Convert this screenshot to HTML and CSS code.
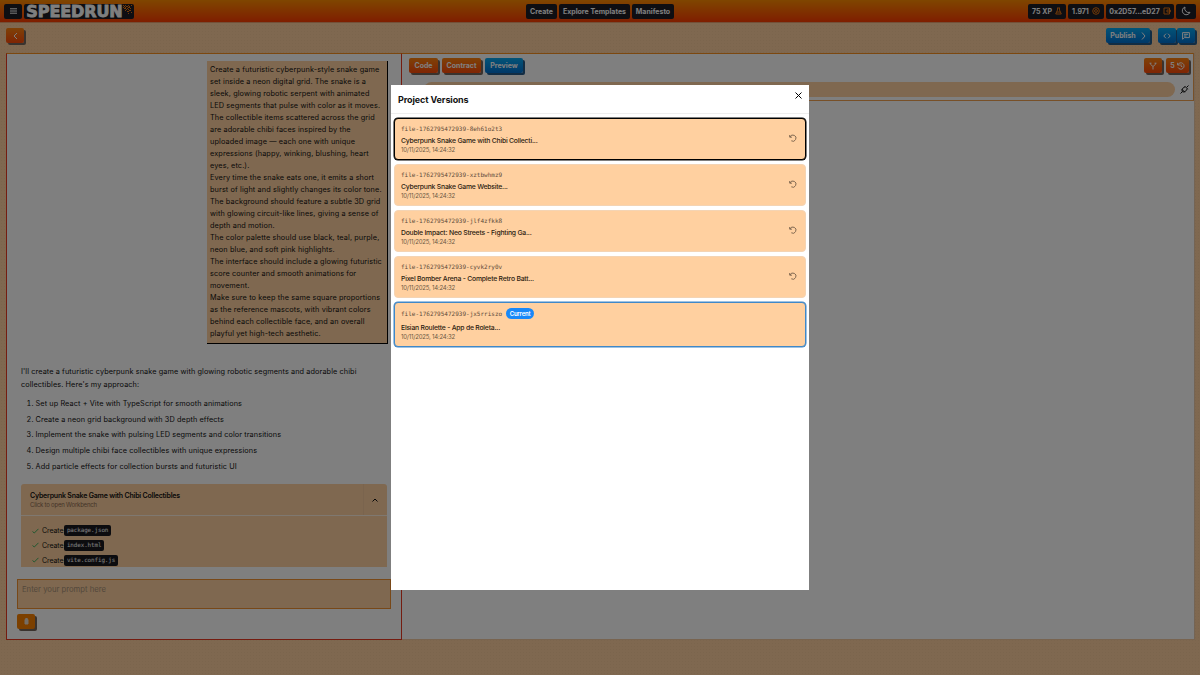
FILE: index.html
```html
<!DOCTYPE html>
<html lang="en">
<head>
  <meta charset="UTF-8" />
  <meta name="viewport" content="width=device-width, initial-scale=1.0" />
  <title>Speedrun</title>
  <link rel="stylesheet" href="styles.css">
</head>
<body>
  <header>
    <div class="header-side">
      <button class="chip menu-btn"><svg width="7" height="6" viewBox="0 0 7 6"><path d="M0 .8h7M0 3h7M0 5.2h7"/></svg></button>
      <div class="chip logo"><span>SPEEDRUN</span>
        <svg width="9" height="9" viewBox="0 0 9 9"><path d="M0 .5h1M2 .5h1M5 .5h1M8 .5h1M1 1.5h1M3 1.5h2M6 1.5h1M0 2.5h1M2 2.5h1M5 2.5h2M1 3.5h2M4 3.5h1M7 3.5h1M3 4.5h1M5 4.5h1M2 5.5h1M6 5.5h2M4 6.5h2M8 7.5h1M5 8.5h1"/></svg>
      </div>
    </div>
    <nav>
      <a class="chip nav-create" href="#">Create</a>
      <a class="chip nav-explore" href="#">Explore Templates</a>
      <a class="chip nav-manifesto" href="#">Manifesto</a>
    </nav>
    <div class="header-side right">
      <span class="chip xp">75 XP <svg width="7" height="8" viewBox="0 0 7 8"><path d="M2 1h3M2.5 1v2L.7 7h5.6L4.5 3V1M2 5h3"/></svg></span>
      <span class="chip coins">1.971 <svg width="8" height="8" viewBox="0 0 8 8"><circle cx="4" cy="4" r="3.3"/><circle cx="4" cy="4" r="1.4"/></svg></span>
      <span class="chip wallet">0x2D57...eD27 <svg width="8" height="8" viewBox="0 0 8 8"><path d="M1 1h5.5v6H1zM4 3h3.3v2H4z"/></svg></span>
      <button class="chip moon"><svg width="10" height="10" viewBox="0 0 10 10"><path d="M4 1a4 4 0 1 0 5 5.3A4 4 0 0 1 4 1z"/></svg></button>
    </div>
  </header>

  <div class="toolbar">
    <button class="btn orange back"><svg width="5" height="8" viewBox="0 0 5 8"><path d="M4 1L1 4l3 3"/></svg></button>
    <div class="toolbar-right">
      <button class="btn blue publish">Publish <svg width="5" height="8" viewBox="0 0 5 8"><path d="M1 .5L4 4 1 7.5"/></svg></button>
      <div class="view-toggle">
        <button class="btn blue"><svg width="8" height="6" viewBox="0 0 8 6"><path d="M3 .7L.8 3 3 5.3M5 .7L7.2 3 5 5.3"/></svg></button>
        <button class="btn blue"><svg width="8" height="8" viewBox="0 0 8 8"><path d="M.6.6h6.8v5H2.3L.6 7.3zM2 2.3h4M2 4h2.5"/></svg></button>
      </div>
    </div>
  </div>

  <main>
    <section class="chat">
      <div class="user-message">Create a futuristic cyberpunk-style snake game<br>set inside a neon digital grid. The snake is a<br>sleek, glowing robotic serpent with animated<br>LED segments that pulse with color as it moves.<br>The collectible items scattered across the grid<br>are adorable chibi faces inspired by the<br>uploaded image — each one with unique<br>expressions (happy, winking, blushing, heart<br>eyes, etc.).<br>Every time the snake eats one, it emits a short<br>burst of light and slightly changes its color tone.<br>The background should feature a subtle 3D grid<br>with glowing circuit-like lines, giving a sense of<br>depth and motion.<br>The color palette should use black, teal, purple,<br>neon blue, and soft pink highlights.<br>The interface should include a glowing futuristic<br>score counter and smooth animations for<br>movement.<br>Make sure to keep the same square proportions<br>as the reference mascots, with vibrant colors<br>behind each collectible face, and an overall<br>playful yet high-tech aesthetic.</div>

      <div class="reply">
        <p>I'll create a futuristic cyberpunk snake game with glowing robotic segments and adorable chibi<br>collectibles. Here's my approach:</p>
        <ol>
          <li>Set up React + Vite with TypeScript for smooth animations</li>
          <li>Create a neon grid background with 3D depth effects</li>
          <li>Implement the snake with pulsing LED segments and color transitions</li>
          <li>Design multiple chibi face collectibles with unique expressions</li>
          <li>Add particle effects for collection bursts and futuristic UI</li>
        </ol>
      </div>

      <div class="artifact">
        <div class="artifact-head">
          <div class="artifact-title">
            <h4>Cyberpunk Snake Game with Chibi Collectibles</h4>
            <p>Click to open Workbench</p>
          </div>
          <div class="artifact-toggle"><svg width="6" height="4" viewBox="0 0 6 4"><path d="M.5 3.5L3 1l2.5 2.5"/></svg></div>
        </div>
        <ul>
          <li><svg width="7" height="6" viewBox="0 0 7 6"><path d="M.5 3.5L2.3 5 6.5.8"/></svg>Create <code>package.json</code></li>
          <li><svg width="7" height="6" viewBox="0 0 7 6"><path d="M.5 3.5L2.3 5 6.5.8"/></svg>Create <code>index.html</code></li>
          <li><svg width="7" height="6" viewBox="0 0 7 6"><path d="M.5 3.5L2.3 5 6.5.8"/></svg>Create <code>vite.config.js</code></li>
        </ul>
      </div>

      <textarea placeholder="Enter your prompt here"></textarea>
      <button class="btn amber attach"><svg width="5" height="8" viewBox="0 0 5 8"><path d="M1 1.5h.7V.5h1.6v1H4v4.500H1z"/></svg></button>
    </section>

    <section class="workbench">
      <div class="workbench-head">
        <div class="tabs">
          <button class="btn orange tab-code">Code</button>
          <button class="btn orange tab-contract">Contract</button>
          <button class="btn blue tab-preview">Preview</button>
          <div class="tab-actions">
            <button class="btn orange fork"><svg width="8" height="8" viewBox="0 0 8 8"><path d="M1.5 1.3v1L4 4.5l2.5-2.2v-1M4 4.5v3M.5 1.2h2M5.5 1.2h2"/></svg></button>
            <button class="btn orange history">5 <svg width="8" height="8" viewBox="0 0 8 8"><path d="M.6.8v2.2h2.2M.9 2.8A3.2 3.2 0 1 1 1 5.4M4 2.3V4.2l1.5.8"/></svg></button>
          </div>
        </div>
        <div class="address">
          <div class="address-bar"></div>
          <svg width="9" height="9" viewBox="0 0 9 9"><path d="M.5 8.5L2.3 6.7M6.7 2.3L8.5.5M4.8 1.2L7.8 4.2M1.8 4.2l3 3M5.2 1.6L2.5 3.5Q1.600 5 2.300 6.700Q4 7.400 5.300 6.500L7.400 3.800"/></svg>
        </div>
      </div>
    </section>
  </main>

  <div class="overlay"></div>

  <div class="modal">
    <div class="modal-head">
      <h2>Project Versions</h2>
      <button class="close"><svg width="7" height="7" viewBox="0 0 7 7"><path d="M.5.5l6 6M6.5.5l-6 6"/></svg></button>
    </div>
    <div class="versions">
      <div class="version focused">
        <div class="info">
          <div class="file">file-1762795472939-8eh61o2t3</div>
          <div class="name">Cyberpunk Snake Game with Chibi Collecti...</div>
          <div class="date">10/11/2025, 14:24:32</div>
        </div>
        <svg class="restore" width="8" height="8" viewBox="0 0 8 8"><path d="M.7 1v2.2h2.2M1 3A3.1 3.1 0 1 1 2.3 6.8"/></svg>
      </div>
      <div class="version">
        <div class="info">
          <div class="file">file-1762795472939-xztbwhmz9</div>
          <div class="name">Cyberpunk Snake Game Website...</div>
          <div class="date">10/11/2025, 14:24:32</div>
        </div>
        <svg class="restore" width="8" height="8" viewBox="0 0 8 8"><path d="M.7 1v2.2h2.2M1 3A3.1 3.1 0 1 1 2.3 6.8"/></svg>
      </div>
      <div class="version">
        <div class="info">
          <div class="file">file-1762795472939-jlf4zfkk8</div>
          <div class="name">Double Impact: Neo Streets - Fighting Ga...</div>
          <div class="date">10/11/2025, 14:24:32</div>
        </div>
        <svg class="restore" width="8" height="8" viewBox="0 0 8 8"><path d="M.7 1v2.2h2.2M1 3A3.1 3.1 0 1 1 2.3 6.8"/></svg>
      </div>
      <div class="version">
        <div class="info">
          <div class="file">file-1762795472939-cyvk2ry0v</div>
          <div class="name">Pixel Bomber Arena - Complete Retro Batt...</div>
          <div class="date">10/11/2025, 14:24:32</div>
        </div>
        <svg class="restore" width="8" height="8" viewBox="0 0 8 8"><path d="M.7 1v2.2h2.2M1 3A3.1 3.1 0 1 1 2.3 6.8"/></svg>
      </div>
      <div class="version current">
        <div class="info">
          <div class="file">file-1762795472939-jx5rriszo <span class="badge">Current</span></div>
          <div class="name">Elsian Roulette - App de Roleta...</div>
          <div class="date">10/11/2025, 14:24:32</div>
        </div>
      </div>
    </div>
  </div>
</body>
</html>
```
FILE: styles.css
```css
* {
  margin: 0;
  padding: 0;
  box-sizing: border-box;
}

body {
  font-family: Inter, sans-serif;
  font-size: 7px;
  color: #111;
  height: 675px;
  overflow: hidden;
  background-color: #ffd0a0;
  background-image: radial-gradient(rgba(190, 160, 110, 0.12) 0.6px, transparent 0.8px);
  background-size: 3px 3px;
}

button {
  font-family: inherit;
  border: none;
  cursor: pointer;
}

svg {
  fill: none;
  stroke: currentColor;
  stroke-width: 1;
  flex-shrink: 0;
}

header {
  height: 23px;
  padding: 0 4px;
  display: flex;
  align-items: center;
  justify-content: space-between;
  background: linear-gradient(#ff8c00, #ff3c00);
  border-bottom: 1px solid #e8a070;
}

.header-side {
  display: flex;
  gap: 2px;
  flex: 1;
}

.header-side.right {
  justify-content: flex-end;
}

nav {
  display: flex;
  gap: 2px;
}

.chip {
  height: 15px;
  display: flex;
  align-items: center;
  justify-content: center;
  gap: 3px;
  background: #1c1c24;
  color: #fff;
  border-radius: 2px;
  font-size: 7px;
  font-weight: 700;
  text-decoration: none;
  white-space: nowrap;
}

.chip svg {
  color: #e87410;
}

.menu-btn {
  width: 18px;
}

.menu-btn svg,
.moon svg {
  color: #fff;
}

.logo {
  width: 110px;
  gap: 0;
}

.logo span {
  font-family: "DejaVu Sans", sans-serif;
  font-size: 16px;
  line-height: 15px;
  letter-spacing: -0.1px;
  -webkit-text-stroke: 0.8px #fff;
}

.logo svg {
  margin-top: -4px;
}

.nav-create { width: 31px; }
.nav-explore { width: 71px; }
.nav-manifesto { width: 42px; }
.xp { width: 38px; }
.coins { width: 36px; }
.wallet { width: 68px; }
.moon { width: 20px; }

.toolbar {
  height: 30px;
  padding: 5px 5px 0 6px;
  display: flex;
  justify-content: space-between;
}

.toolbar-right,
.view-toggle {
  display: flex;
}

.toolbar-right {
  gap: 8px;
}

.view-toggle {
  gap: 1px;
}

.view-toggle .btn {
  width: 18px;
}

.btn {
  height: 15px;
  display: flex;
  align-items: center;
  justify-content: center;
  color: #fff;
  font-size: 7px;
  font-weight: 700;
  border-radius: 2px;
  box-shadow: 2px 2px 0 #75665c;
}

.orange {
  background: linear-gradient(#ff8410, #ff4a08);
}

.blue {
  background: linear-gradient(#08a8f0, #0070d0);
  box-shadow: 2px 2px 0 #245a88;
}

.amber {
  background: #f88000;
}

.back {
  width: 18px;
}

.publish {
  width: 44px;
  gap: 5px;
}

main {
  height: 587px;
  margin: 0 5px 0 6px;
  display: flex;
}

.chat {
  width: 396px;
  flex-shrink: 0;
  padding: 7px 10px 0;
  background: #fff;
  border: 1px solid #e83820;
  border-top-color: #f89020;
}

.user-message {
  width: 181px;
  height: 283px;
  margin-left: 190px;
  padding: 3px 0 0 3px;
  background: #ffd0a0;
  border-right: 1px solid #000;
  border-bottom: 1px solid #000;
  font-size: 7.3px;
  letter-spacing: 0.12px;
  line-height: 12px;
  white-space: nowrap;
}

.reply {
  margin: 22px 0 0 4px;
  font-size: 7.3px;
  letter-spacing: 0.1px;
  line-height: 12.5px;
}

.reply ol {
  margin: 5px 0 0 14.5px;
}

.reply li {
  height: 15.7px;
  line-height: 15.7px;
}

.artifact {
  width: 366px;
  height: 83px;
  margin: 10px 0 0 4px;
  background: #ffd0a0;
  border-radius: 3px 3px 0 0;
  overflow: hidden;
}

.artifact-head {
  height: 32px;
  display: flex;
  border-bottom: 1px solid #fff0e0;
}

.artifact-title {
  flex: 1;
  padding: 7px 0 0 9px;
}

.artifact-title h4 {
  font-size: 7px;
  letter-spacing: -0.2px;
  line-height: 10px;
  font-weight: 600;
}

.artifact-title p {
  font-size: 6px;
  letter-spacing: -0.2px;
  line-height: 8px;
  color: #8a6a50;
}

.artifact-toggle {
  width: 24px;
  padding-right: 1px;
  display: flex;
  align-items: center;
  justify-content: center;
  border-left: 1px solid #f4c89c;
}

.artifact ul {
  list-style: none;
  padding: 7px 0 0 11px;
}

.artifact li {
  height: 14.7px;
  display: flex;
  align-items: center;
  font-size: 7px;
  letter-spacing: -0.1px;
}

.artifact li svg {
  color: #40b060;
  margin-right: 3px;
}

.artifact code {
  height: 11px;
  margin-left: 1px;
  padding: 0 2.5px;
  line-height: 11px;
  font-family: "DejaVu Sans Mono", monospace;
  font-size: 5.9px;
  background: #18181f;
  color: #fff;
  border-radius: 2px;
}

textarea {
  display: block;
  width: 374px;
  height: 30px;
  margin-top: 12px;
  padding: 5px 4px;
  resize: none;
  background: #ffd0a0;
  border: 1px solid #f09030;
  font-family: inherit;
  font-size: 7.7px;
}

textarea::placeholder {
  color: #a89078;
}

.attach {
  width: 18px;
  margin-top: 5px;
}

.attach svg {
  fill: #e8dccc;
  color: #e8dccc;
}

.workbench {
  flex: 1;
  background: #fff;
  border-right: 1px solid #e8c8a8;
  border-bottom: 1px solid #f0c8a0;
}

.workbench-head {
  height: 48px;
  border: 1px solid #f0a050;
  border-left: none;
  border-top-color: #f89020;
}

.tabs {
  display: flex;
  gap: 4px;
  padding: 4px 4px 0 7px;
}

.tab-code { width: 29px; }
.tab-contract { width: 39px; }
.tab-preview { width: 38px; }

.tab-actions {
  display: flex;
  gap: 4px;
  margin-left: auto;
}

.fork { width: 18px; }

.history {
  width: 23px;
  gap: 2px;
}

.address {
  display: flex;
  align-items: center;
  gap: 5px;
  padding: 9px 4px 0 22px;
}

.address-bar {
  flex: 1;
  height: 15px;
  border-radius: 8px;
  background: #ffd0a0;
}

.overlay {
  position: fixed;
  top: 0;
  left: 0;
  width: 100%;
  height: 100%;
  background: rgba(0, 0, 0, 0.5);
}

.modal {
  position: fixed;
  top: 85px;
  left: 391px;
  width: 418px;
  height: 505px;
  background: #fff;
}

.modal-head {
  height: 29px;
  padding: 0 7px;
  display: flex;
  justify-content: space-between;
  border-bottom: 1px solid #eee;
}

.modal-head h2 {
  font-size: 9px;
  letter-spacing: -0.1px;
  line-height: 29px;
  font-weight: 700;
}

.close {
  height: 21px;
  padding-bottom: 3px;
  background: none;
}

.versions {
  padding: 4px 3px 0;
  display: flex;
  flex-direction: column;
  gap: 4px;
}

.version {
  height: 42px;
  padding: 5px 8px 0 6px;
  display: flex;
  justify-content: space-between;
  background: #ffd0a0;
  border: 1px solid #f4d4b4;
  border-radius: 4px;
}

.focused {
  border-color: #000;
  box-shadow: 0 0 0 0.5px #000;
}

.current {
  height: 45px;
  border-color: #4088c8;
  box-shadow: 0 0 0 0.5px #4088c8;
}

.file {
  display: flex;
  align-items: center;
  gap: 4px;
  height: 8px;
  font-family: "DejaVu Sans Mono", monospace;
  font-size: 6px;
  color: #5c4a3a;
}

.current .file {
  height: 11px;
}

.badge {
  height: 11px;
  padding: 0 3.5px;
  line-height: 11px;
  border-radius: 6px;
  background: #1888f8;
  color: #fff;
  font-family: Inter, sans-serif;
  font-weight: 600;
  letter-spacing: -0.2px;
}

.name {
  margin-top: 3px;
  font-size: 6.8px;
  letter-spacing: -0.2px;
  line-height: 11px;
  font-weight: 500;
  color: #2c1c10;
}

.date {
  font-size: 6px;
  letter-spacing: -0.2px;
  line-height: 8px;
  color: #6c5844;
}

.restore {
  margin-top: 10px;
  color: #806850;
}
```
